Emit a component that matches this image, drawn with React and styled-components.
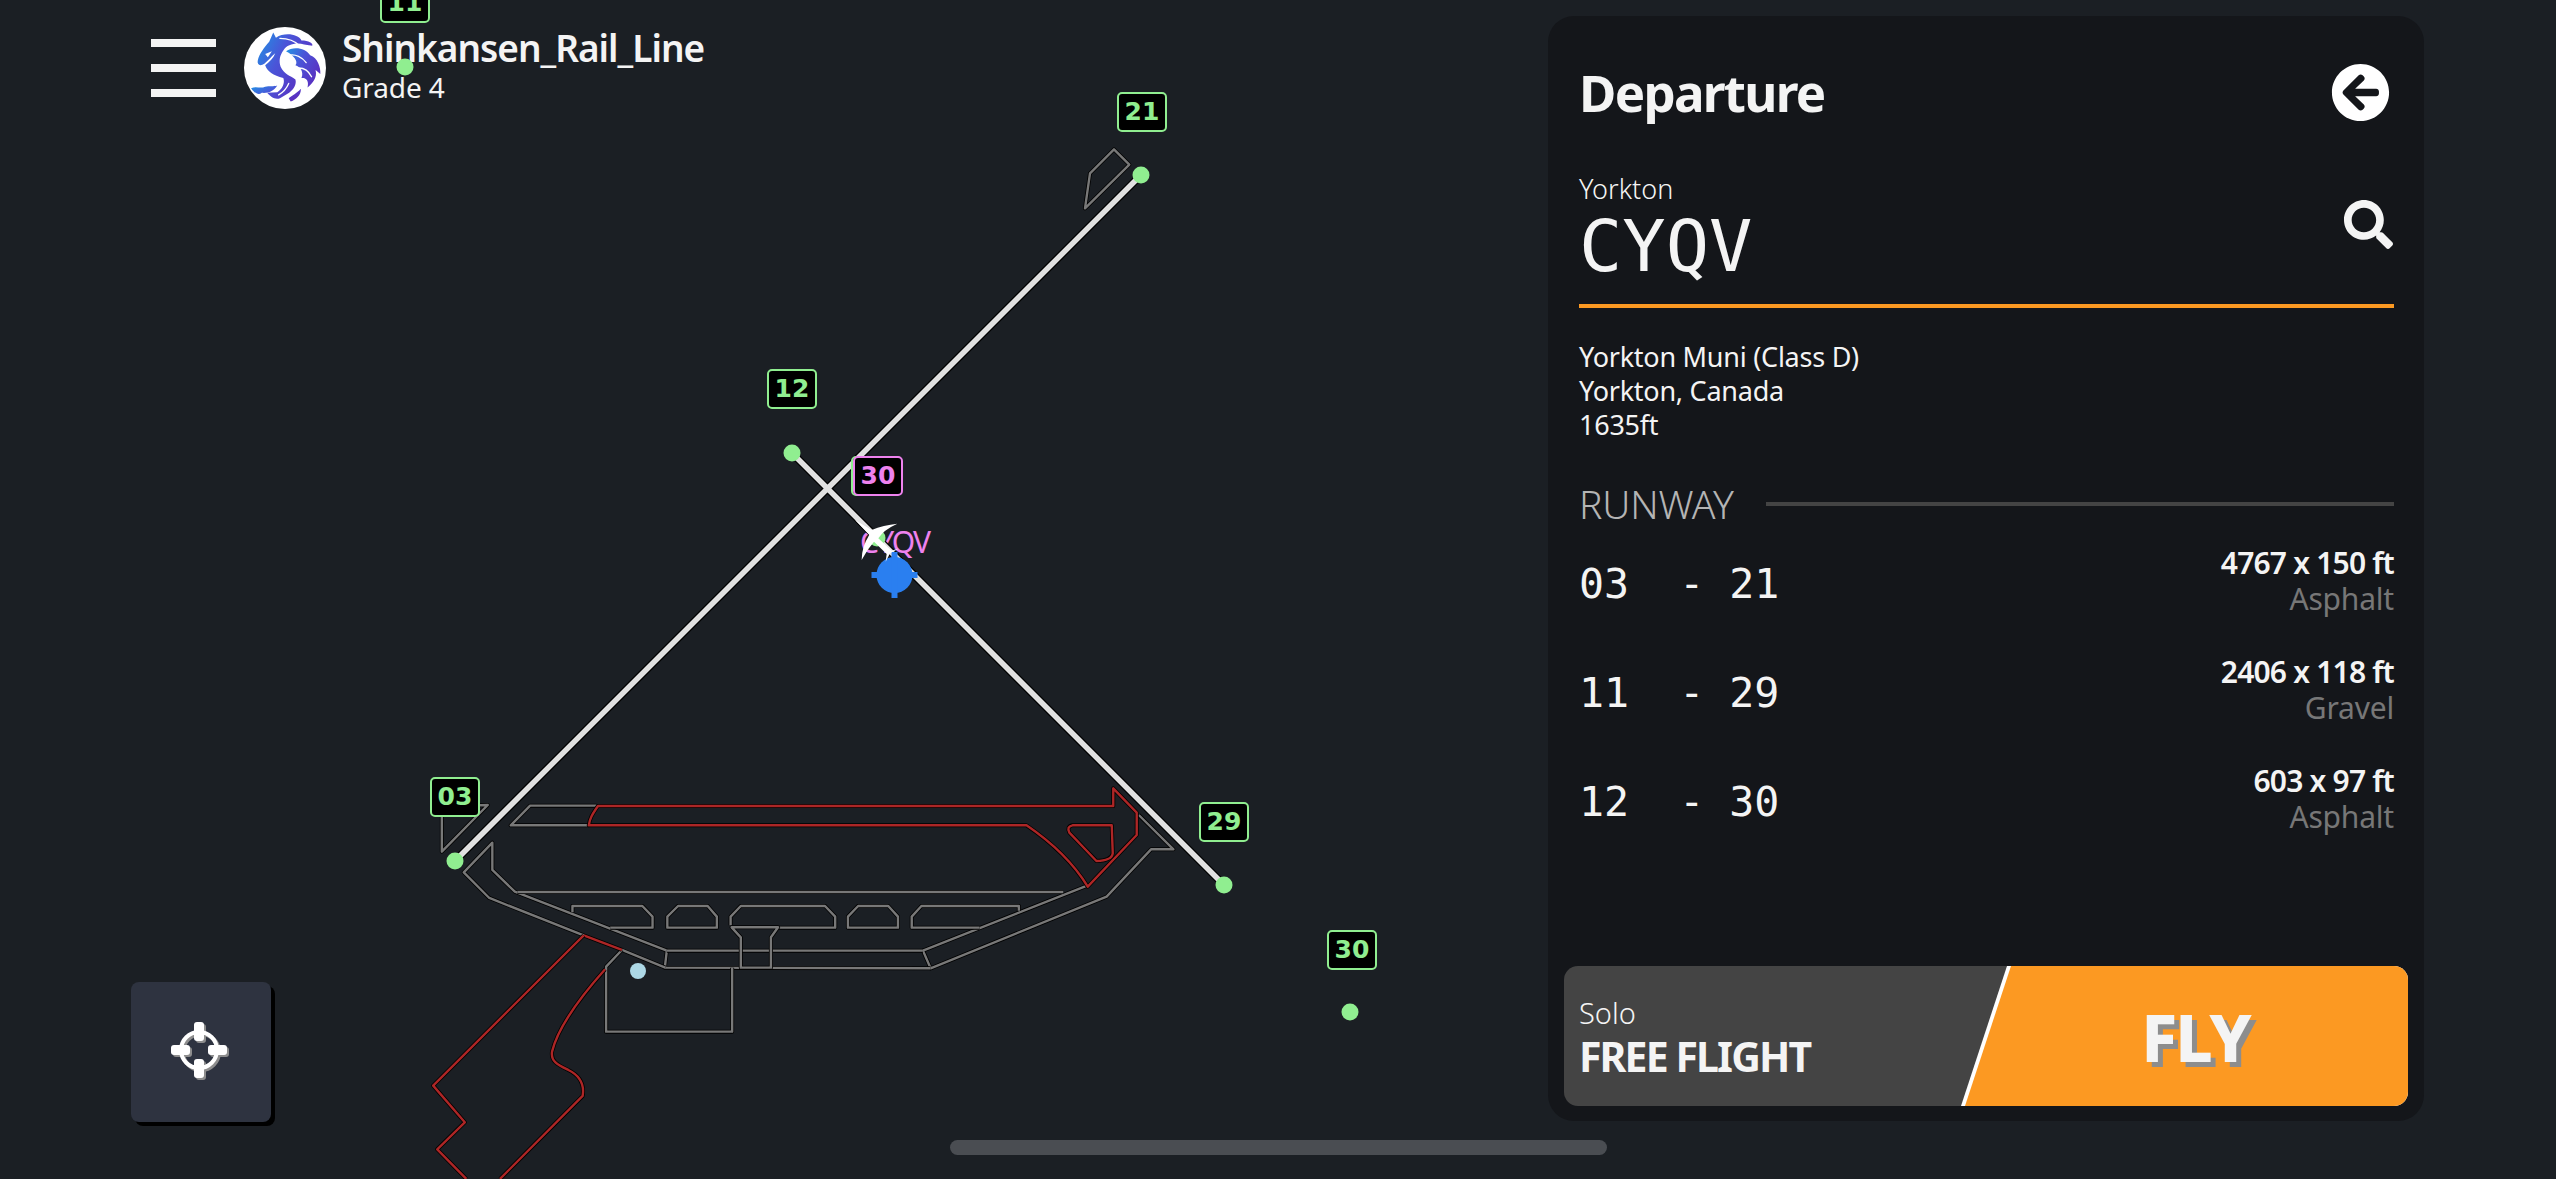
import styled, { createGlobalStyle } from 'styled-components'
import { FaArrowCircleLeft, FaSearch } from 'react-icons/fa'

const sans = `"Noto Sans", "Open Sans", sans-serif`
const mono = `"DejaVu Sans Mono", "Liberation Mono", monospace`
const green = '#90ee90'
const violet = '#ee82ee'
const orange = '#fc9922'

const GlobalStyle = createGlobalStyle`
  html, body {
    margin: 0;
    padding: 0;
    background: #1b1f24;
    font-family: ${sans};
    color: #f4f4f4;
    overflow: hidden;
  }
`
const Screen = styled.div`
  position: relative;
  width: 2556px;
  height: 1179px;
  box-sizing: border-box;
  padding: 16px 132px 57px 131px;
  background: #1b1f24;
  overflow: hidden;
  display: flex;
  justify-content: space-between;
`
const LeftColumn = styled.div`
  display: flex;
  flex-direction: column;
  justify-content: space-between;
`
const Header = styled.div`
  display: flex;
  align-items: center;
  gap: 18px;
  padding: 11px 0 0 20px;
`
const Burger = styled.div`
  width: 65px;
  display: flex;
  flex-direction: column;
  gap: 17px;
  margin-right: 10px;
`
const BurgerBar = styled.div`
  height: 8px;
  background: #f4f4f4;
`
const Avatar = styled.svg`
  width: 82px;
  height: 82px;
  display: block;
`
const UserBlock = styled.div`
  margin: -6px 0 0 -2px;
`
const UserName = styled.div`
  font-size: 37px;
  line-height: 44px;
  font-weight: 600;
  letter-spacing: -1px;
`
const UserGrade = styled.div`
  font-size: 28px;
  line-height: 34px;
  font-weight: 400;
  letter-spacing: -0.1px;
`
const LocateButton = styled.div`
  width: 140px;
  height: 140px;
  border-radius: 8px;
  background: #2e3340;
  box-shadow: 4px 4px 0 #000;
  display: flex;
  align-items: center;
  justify-content: center;
`
const Panel = styled.div`
  position: relative;
  z-index: 2;
  width: 876px;
  height: 1105px;
  box-sizing: border-box;
  padding: 0 16px 15px;
  border-radius: 26px;
  background: #14161a;
  display: flex;
  flex-direction: column;
`
const PanelBody = styled.div`
  flex: 1;
  padding: 0 14px 0 15px;
`
const TitleRow = styled.div`
  display: flex;
  justify-content: space-between;
  align-items: center;
  height: 116px;
  padding-top: 36px;
  box-sizing: border-box;
  margin-bottom: 31px;
  svg {
    margin-right: 4px;
  }
`
const Title = styled.div`
  font-size: 51px;
  line-height: 60px;
  font-weight: 700;
  letter-spacing: -1.7px;
`
const AirportRow = styled.div`
  display: flex;
  justify-content: space-between;
  align-items: flex-start;
  height: 131px;
  padding-top: 10px;
  border-bottom: 4px solid ${orange};
  margin-bottom: 32px;
  svg {
    margin: 27px 1px 0 0;
  }
`
const AirportCity = styled.div`
  font-size: 27px;
  line-height: 32px;
  font-weight: 300;
`
const AirportCode = styled.div`
  font-family: ${mono};
  font-size: 72px;
  line-height: 76px;
  font-weight: 400;
  margin-top: 3px;
`
const InfoLine = styled.div`
  font-size: 27px;
  line-height: 34px;
  font-weight: 400;
  letter-spacing: -0.25px;
`
const SectionRow = styled.div`
  display: flex;
  align-items: center;
  gap: 32px;
  margin: 38px 0 -2px;
`
const SectionLabel = styled.div`
  font-size: 39px;
  line-height: 48px;
  font-weight: 300;
  color: #b4b4b4;
  letter-spacing: -0.2px;
`
const SectionRule = styled.div`
  flex: 1;
  height: 4px;
  background: #444;
`
const RunwayRow = styled.div`
  display: flex;
  justify-content: space-between;
  align-items: center;
  height: 109px;
`
const RunwayName = styled.div`
  font-family: ${mono};
  font-size: 41.6px;
  white-space: pre;
  padding-top: 6px;
`
const RunwayDetail = styled.div`
  text-align: right;
`
const RunwaySize = styled.div`
  font-size: 30px;
  line-height: 36px;
  font-weight: 600;
  letter-spacing: -0.8px;
`
const RunwaySurface = styled.div`
  font-size: 30px;
  line-height: 36px;
  color: #777;
  letter-spacing: -0.2px;
`
const FlyBar = styled.div`
  height: 140px;
  display: flex;
  align-items: center;
  justify-content: space-between;
  border-radius: 14px;
  overflow: hidden;
  background: #444;
`
const FlyLabels = styled.div`
  padding: 4px 0 0 15px;
`
const FlyMode = styled.div`
  font-size: 29px;
  line-height: 36px;
  font-weight: 300;
`
const FlyName = styled.div`
  font-size: 41px;
  line-height: 50px;
  font-weight: 700;
  letter-spacing: -1.9px;
`
const FlyEdge = styled.div`
  width: 447px;
  height: 140px;
  background: #fff;
  clip-path: polygon(46px 0, 100% 0, 100% 100%, 0 100%);
`
const FlyButton = styled.div`
  width: 443px;
  height: 140px;
  margin-left: 4px;
  background: ${orange};
  clip-path: polygon(46px 0, 100% 0, 100% 100%, 0 100%);
  display: flex;
  align-items: center;
  justify-content: center;
  font-size: 66px;
  font-weight: 800;
  letter-spacing: -1.8px;
  text-shadow: 5px 5px 0 #8d8d8d;
  padding-left: 18px;
  box-sizing: border-box;
`
const HomeIndicator = styled.div`
  position: absolute;
  left: 950px;
  top: 1140px;
  width: 657px;
  height: 15px;
  border-radius: 8px;
  background: #4a4d52;
`
const MapLayer = styled.div`
  position: absolute;
  inset: 0;
  pointer-events: none;
  z-index: 1;
`
const MapDrawing = styled.svg`
  position: absolute;
  left: 0;
  top: 0;
`
const RunwayTag = styled.div`
  position: absolute;
  left: ${(p) => p.$x}px;
  top: ${(p) => p.$y}px;
  width: 50px;
  height: 40px;
  box-sizing: border-box;
  border: 2px solid ${(p) => p.$color};
  border-radius: 5px;
  background: #000;
  color: ${(p) => p.$color};
  font-family: "DejaVu Sans", sans-serif;
  font-size: 25px;
  font-weight: 700;
  line-height: 36px;
  text-align: center;
`
const AirportTag = styled.div`
  position: absolute;
  left: 860px;
  top: 522px;
  font-size: 30px;
  line-height: 40px;
  letter-spacing: -1.8px;
  color: ${violet};
`

const trace = (d, color, key) => (
  <g key={key} fill="none" strokeLinejoin="round">
    <path d={d} stroke="#000" strokeWidth="4" vectorEffect="non-scaling-stroke" />
    <path d={d} stroke={color} strokeWidth="2.4" vectorEffect="non-scaling-stroke" />
  </g>
)

const grayTraces = [
  'M172 195 L82 335 L82 200 Z',
  'M385 197 L255 197 L217 256 L370 256',
  'M1348 436 L1025 632 L1040 685 L1385 470 L1472 328 L1516 328 L1448 225',
  'M360 586 L175 474 L125 397 L181 308 L181 390 L225 455 L523 632 L519 683 L1040 685',
  'M435 630 L520 683',
  'M230 456 L1300 456',
  'M523 632 L1025 632',
  'M338 517 L338 498 L475 498 L495 530 L495 563 L412 563',
  'M524 563 L524 530 L545 498 L603 498 L621 530 L621 563 Z',
  'M648 556 L648 530 L668 498 L833 498 L853 530 L853 563 L743 563',
  'M650 562 L668 592 L668 683 L727 683 L727 592 L741 562 Z',
  'M878 563 L878 530 L898 498 L957 498 L976 530 L976 563 Z',
  'M1136 563 L1003 563 L1003 530 L1022 498 L1213 498 L1213 512',
  'M435 630 L404 680 L404 875 L651 875 L651 683',
]
const redTraces = [
  'M388 198 C376 225 372 235 370 256 L1228 256 C1280 310 1320 370 1348 440 L1444 285 L1444 218 L1398 145 L1398 198 Z',
  'M1318 256 L1395 256 L1397 340 Q1395 362 1365 363 L1312 278 Q1306 260 1318 256 Z',
  'M360 586 L435 630',
  'M360 586 L65 1037 L127 1147 L73 1228 L130 1317',
  'M196 1317 L358 1068 C362 1030 350 1005 330 990 C310 975 295 965 298 935 C310 860 360 760 402 688',
]

const dots = [
  [405, 67], [1141, 175], [792, 453], [455, 861], [1224, 885], [1350, 1012], [877, 538],
]
const tags = [
  ['11', 380, -17], ['21', 1117, 92], ['12', 767, 369], ['03', 430, 777], ['29', 1199, 802],
  ['30', 1327, 930], ['30', 851, 456],
]
const runways = [
  ['03  - 21', '4767 x 150 ft', 'Asphalt'],
  ['11  - 29', '2406 x 118 ft', 'Gravel'],
  ['12  - 30', '603 x 97 ft', 'Asphalt'],
]

const AvatarArt = () => (
  <Avatar viewBox="43 28 244 244">
    <defs>
      <linearGradient id="mane" x1="0" y1="0" x2="1" y2="0.6">
        <stop offset="0" stopColor="#1f95e4" />
        <stop offset="0.45" stopColor="#4a55d8" />
        <stop offset="1" stopColor="#5a2fc0" />
      </linearGradient>
    </defs>
    <circle cx="165" cy="150" r="122" fill="#fff" />
    <path
      fill="url(#mane)"
      d="M84 128 C88 108 104 88 118 72 L130 44 L138 60 C165 42 205 50 214 68 C235 68 250 76 246 84 L222 80 C200 74 172 78 160 98 C150 112 146 128 152 146 C162 168 180 172 196 184 C200 196 192 216 170 228 L150 240 C136 246 122 236 112 224 L142 222 C156 214 166 196 160 180 C130 172 112 160 106 142 C118 132 130 122 136 106 C122 116 108 140 92 142 C86 142 82 136 84 128 Z"
    />
    <path
      fill="url(#mane)"
      d="M168 100 C190 84 226 90 240 112 C262 118 272 150 270 168 L256 156 C262 180 246 196 232 208 C238 184 224 178 214 180 C222 162 210 146 196 142 C206 130 190 112 168 100 Z"
    />
    <path
      fill="url(#mane)"
      d="M64 210 C80 204 92 212 106 206 C118 202 130 206 142 202 C132 218 116 226 96 224 C86 232 76 226 64 210 Z M176 240 C186 232 200 226 212 212 C214 228 200 244 182 250 Z"
    />
    <path fill="#fff" d="M106 108 L126 100 L114 118 Z" />
    <path
      fill="none"
      stroke="#fff"
      strokeWidth="4"
      strokeLinecap="round"
      d="M150 62 C175 62 195 70 208 84 M178 112 C196 108 216 118 228 134 M206 150 C222 150 236 160 244 176 M176 196 C170 210 160 222 146 230"
    />
  </Avatar>
)

const LocateIcon = () => (
  <svg width="62" height="62" viewBox="0 0 62 62">
    <g transform="translate(2 2)" fill="#8d8d8d">
      <circle cx="29" cy="29" r="18" fill="none" stroke="#8d8d8d" strokeWidth="4" />
      <rect x="24" y="1" width="10" height="19" rx="3" />
      <rect x="24" y="38" width="10" height="19" rx="3" />
      <rect x="1" y="24" width="19" height="10" rx="3" />
      <rect x="38" y="24" width="19" height="10" rx="3" />
    </g>
    <g fill="#fff">
      <circle cx="29" cy="29" r="18" fill="none" stroke="#fff" strokeWidth="4" />
      <rect x="24" y="1" width="10" height="19" rx="3" />
      <rect x="24" y="38" width="10" height="19" rx="3" />
      <rect x="1" y="24" width="19" height="10" rx="3" />
      <rect x="38" y="24" width="19" height="10" rx="3" />
    </g>
  </svg>
)

const AirportMap = () => (
  <MapLayer>
    <AirportTag>CYQV</AirportTag>
    <MapDrawing width="2556" height="1179" viewBox="0 0 2556 1179">
      <g transform="translate(400 740) scale(0.5102 0.3333)">
        {grayTraces.map((d, i) => trace(d, '#787878', `g${i}`))}
        {redTraces.map((d, i) => trace(d, '#ad2626', `r${i}`))}
      </g>
      <g transform="translate(1040 130) scale(0.3333)">
        {trace('M135 235 L150 130 L222 58 L268 104 Z', '#787878', 'wing')}
      </g>
      <g stroke="#000" strokeWidth="8" strokeLinecap="round">
        <path d="M455 861 L1141 175 M792 453 L1224 885" />
      </g>
      <g stroke="#e0e0e0" strokeWidth="5.5" strokeLinecap="round">
        <path d="M455 861 L1141 175 M792 453 L1224 885" />
      </g>
      <circle cx="638" cy="971" r="8" fill="#add8e6" />
      {dots.map(([cx, cy]) => (
        <circle key={`${cx}-${cy}`} cx={cx} cy={cy} r="8.5" fill={green} />
      ))}
      <g fill="#2a7ff0">
        <circle cx="894.5" cy="575" r="18" />
        <rect x="871.5" y="572" width="46" height="6" />
        <rect x="891.5" y="552" width="6" height="46" />
      </g>
      <path
        transform="translate(740 360) scale(0.3333)"
        fill="#fff"
        d="M345 480 L395 510 Q430 495 472 491 Q430 510 415 535 L455 572 L478 565 L450 580 L437 605 L440 582 L402 545 Q380 570 365 600 Q365 560 388 525 Z"
      />
    </MapDrawing>
    {tags.map(([label, x, y]) => (
      <RunwayTag key={`${label}-${x}`} $x={x} $y={y} $color={green}>{label}</RunwayTag>
    ))}
    <RunwayTag $x={853} $y={456} $color={violet}>30</RunwayTag>
  </MapLayer>
)

const App = () => (
  <Screen>
    <GlobalStyle />
    <LeftColumn>
      <Header>
        <Burger>
          <BurgerBar />
          <BurgerBar />
          <BurgerBar />
        </Burger>
        <AvatarArt />
        <UserBlock>
          <UserName>Shinkansen_Rail_Line</UserName>
          <UserGrade>Grade 4</UserGrade>
        </UserBlock>
      </Header>
      <LocateButton>
        <LocateIcon />
      </LocateButton>
    </LeftColumn>
    <AirportMap />
    <Panel>
      <PanelBody>
        <TitleRow>
          <Title>Departure</Title>
          <FaArrowCircleLeft size={59} color="#fff" />
        </TitleRow>
        <AirportRow>
          <div>
            <AirportCity>Yorkton</AirportCity>
            <AirportCode>CYQV</AirportCode>
          </div>
          <FaSearch size={49} color="#f4f4f4" />
        </AirportRow>
        <InfoLine>Yorkton Muni (Class D)</InfoLine>
        <InfoLine>Yorkton, Canada</InfoLine>
        <InfoLine>1635ft</InfoLine>
        <SectionRow>
          <SectionLabel>RUNWAY</SectionLabel>
          <SectionRule />
        </SectionRow>
        {runways.map(([name, size, surface]) => (
          <RunwayRow key={name}>
            <RunwayName>{name}</RunwayName>
            <RunwayDetail>
              <RunwaySize>{size}</RunwaySize>
              <RunwaySurface>{surface}</RunwaySurface>
            </RunwayDetail>
          </RunwayRow>
        ))}
      </PanelBody>
      <FlyBar>
        <FlyLabels>
          <FlyMode>Solo</FlyMode>
          <FlyName>FREE FLIGHT</FlyName>
        </FlyLabels>
        <FlyEdge>
          <FlyButton>FLY</FlyButton>
        </FlyEdge>
      </FlyBar>
    </Panel>
    <HomeIndicator />
  </Screen>
)

export default App
